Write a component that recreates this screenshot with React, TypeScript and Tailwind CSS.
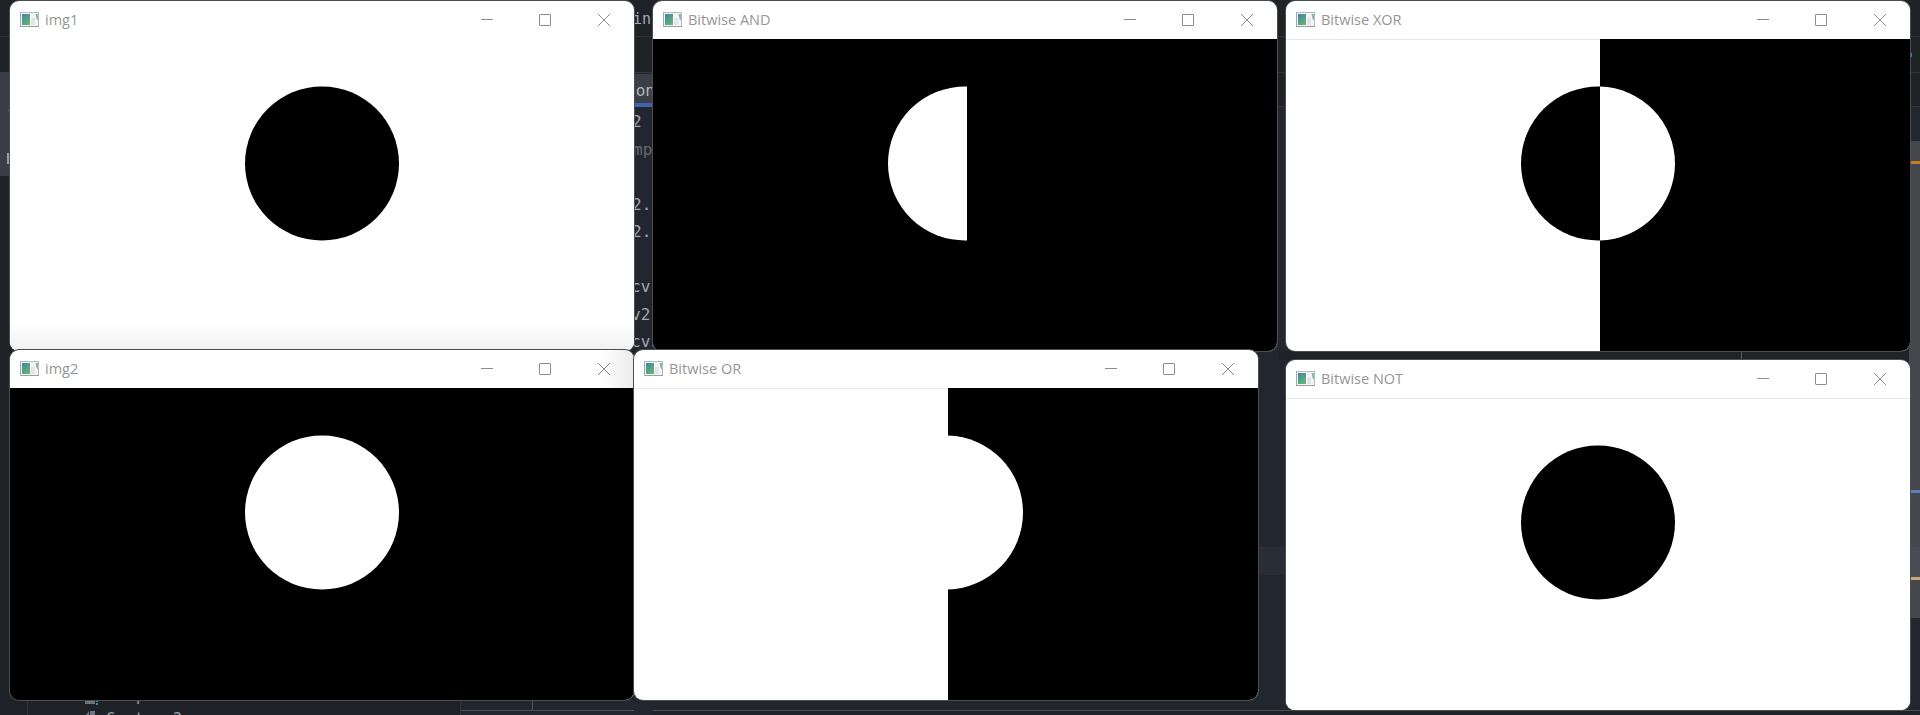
import React from "react";

type Scene = "circleDark" | "circleLight" | "and" | "or" | "xor";

const CX = 312;
const CY = 124.5;
const R = 77;
const SPLIT = 314;
const TOP = CY - Math.sqrt(R * R - (SPLIT - CX) ** 2);
const BOTTOM = 2 * CY - TOP;

function Canvas({ scene }: { scene: Scene }) {
  const left = scene === "or" || scene === "xor" || scene === "circleDark" ? "#fff" : "#000";
  const right = scene === "circleDark" ? "#fff" : "#000";
  const arcRight = `M${SPLIT} ${TOP}A${R} ${R} 0 0 1 ${SPLIT} ${BOTTOM}Z`;
  const arcLeft = `M${SPLIT} ${TOP}A${R} ${R} 0 1 0 ${SPLIT} ${BOTTOM}Z`;
  return (
    <svg className="block h-[312px] w-[624px]" viewBox="0 0 624 312">
      <rect width="624" height="312" fill={right} />
      <rect width={SPLIT} height="312" fill={left} />
      {scene === "circleDark" && <circle cx={CX} cy={CY} r={R} fill="#000" />}
      {scene === "circleLight" && <circle cx={CX} cy={CY} r={R} fill="#fff" />}
      {scene === "xor" && <path d={arcLeft} fill="#000" />}
      {scene === "and" && <path d={arcLeft} fill="#fff" />}
      {(scene === "or" || scene === "xor") && <path d={arcRight} fill="#fff" />}
    </svg>
  );
}

function AppIcon() {
  return (
    <svg className="h-4 w-5 shrink-0" viewBox="0 0 20 16">
      <defs>
        <linearGradient id="pane" x1="0" y1="0" x2="0.6" y2="1">
          <stop offset="0" stopColor="#4682a8" />
          <stop offset="1" stopColor="#5fb472" />
        </linearGradient>
      </defs>
      <rect x="0.5" y="0.5" width="18" height="14" fill="#f3f5f7" stroke="#b4bac4" />
      <path d="M0 14.5H19" stroke="#989faa" />
      <path d="M0.5 0V15" stroke="#a0a7b2" />
      <rect x="2" y="2" width="8" height="11" fill="url(#pane)" />
      <rect x="10" y="2" width="1" height="11" fill="#fff" />
      <rect x="11" y="6" width="4" height="7" fill="#e2e4e7" />
      <path d="M15.5 2H18V8.5L16.5 7Z" fill="#86b9a8" />
    </svg>
  );
}

function Controls() {
  return (
    <svg className="h-[38px] w-36 shrink-0" viewBox="0 0 144 38" fill="none" stroke="#8d8d8d">
      <path d="M1 18.5H13" />
      <rect x="59.5" y="13.5" width="11" height="11" rx="0.5" />
      <path d="M118 13L130 25M130 13L118 25" />
    </svg>
  );
}

function Win({
  title,
  scene,
  place,
  line,
  shade,
}: {
  title: string;
  scene: Scene;
  place: string;
  line?: string;
  shade?: string;
}) {
  return (
    <section className={`absolute h-[350px] w-[624px] overflow-hidden rounded-[9px] bg-white shadow-[0_0_0_1px_#4b4d50] ${place}`}>
      <header className="flex h-[38px] items-center">
        <div className="flex flex-1 items-center gap-[5px] pl-[10px]">
          <AppIcon />
          <span className="text-[14.5px] leading-5 whitespace-nowrap text-[#969696]">{title}</span>
        </div>
        <Controls />
        <div className="w-[10px]" />
      </header>
      <Canvas scene={scene} />
      {line && <div className={`absolute left-0 top-[38px] h-px bg-[#e8e8e8] ${line}`} />}
      {shade && <div className={`absolute ${shade}`} />}
    </section>
  );
}

const codeLines = [
  { text: "2", shift: "pl-0", tone: "text-[#a4a9b0]", tail: false },
  { text: "mp", shift: "pl-[1px]", tone: "text-[#666a72]", tail: false },
  { text: "", shift: "pl-0", tone: "", tail: false },
  { text: "2.", shift: "pl-0", tone: "text-[#a4a9b0]", tail: true },
  { text: "2.", shift: "pl-0", tone: "text-[#a4a9b0]", tail: true },
  { text: "", shift: "pl-0", tone: "", tail: false },
  { text: "cv", shift: "-ml-[1px]", tone: "text-[#a4a9b0]", tail: true },
  { text: "v2", shift: "-ml-[1px]", tone: "text-[#a4a9b0]", tail: false },
  { text: "cv", shift: "-ml-[1px]", tone: "text-[#a4a9b0]", tail: true },
];

function Editor() {
  return (
    <div className="flex h-[715px] w-[1920px] flex-col bg-[#22262e]">
      <div className="h-9 shrink-0 bg-[#1f2328] pl-[633px]">
        <div className="w-[20px] overflow-hidden pt-[7px] font-['DejaVu_Sans_Mono',monospace] text-[15px] leading-6 text-[#a4a9b0]">
          inc
        </div>
      </div>
      <div className="flex h-9 shrink-0 items-center justify-end border-t border-[#30343b] bg-[#1f2328]">
        <div className="mr-[8px] h-1 w-[2px] bg-[#3584b5]" />
      </div>
      <div className="flex flex-1">
        <div className="flex w-[634px] flex-col bg-[#1e2227]">
          <div className="flex h-[104px] w-[10px] flex-col items-end bg-[#3a3e47]">
            <div className="mt-4 h-px w-px bg-[#5278ad]" />
            <div className="mt-[21px] h-px w-[2px] bg-[#5278ad]" />
            <div className="mt-[23px] h-[5px] w-px bg-[#4464b0]" />
            <div className="mt-[14px] h-[11px] w-[3px] shrink-0 bg-[#9c9fa3]" />
          </div>
          <div className="flex-1" />
          <div className="flex h-[15px]">
            <div className="w-[28px] shrink-0 border-r border-[#2d3136]" />
            <div className="w-[432px] shrink-0 overflow-hidden pl-[56px]">
              <svg className="block h-[15px] w-[130px]" viewBox="0 0 130 15">
                <path d="M1 0H11V4H1Z" fill="#6d757e" />
                <path d="M12 0H14V2H12ZM12 3H14V5H12Z" fill="#2b8ca9" />
                <path d="M2 15L5 11V15ZM6 11H11V15H6Z" fill="#6d757e" />
                <g fill="#a0a4aa" fontFamily="DejaVu Sans Mono" fontSize="15">
                  <text x="23" y="0.7" textLength="96">Setperate2</text>
                  <text x="22" y="24.4" textLength="76">Contour2</text>
                </g>
              </svg>
            </div>
            <div className="flex flex-1 flex-col border-l border-[#30343b] bg-[#22262e]">
              <div className="h-[10px] w-[72px] border-r border-[#50535a]" />
              <div className="h-px bg-[#4b4e55]" />
            </div>
          </div>
        </div>
        <div className="flex w-[19px] flex-col overflow-hidden border-t border-[#353941]">
          <div className="mt-px flex h-[29px] items-center bg-[#3a3e47] pt-[4px] font-['DejaVu_Sans_Mono',monospace] text-[16px] text-[#b4b8bd]">
            <span className="-ml-[8px]">ion</span>
          </div>
          <div className="h-1 bg-[#4063b0]" />
          <div className="pt-[1px]">
            {codeLines.map((l, i) => (
              <div
                key={i}
                className={`flex h-[27.5px] items-center justify-between whitespace-nowrap font-['DejaVu_Sans_Mono',monospace] text-[16px] leading-[27.5px] ${l.shift} ${l.tone}`}
              >
                <span className="-ml-[2px]">{l.text}</span>
                {l.tail && <span className="h-[10px] w-px bg-[#365a85]" />}
              </div>
            ))}
          </div>
        </div>
        <div className="flex flex-1 flex-col">
          <div className="h-[35px] shrink-0 border-y border-[#30343b] bg-[#1f2328]" />
          <div className="flex flex-1">
            <div className="flex flex-1 flex-col">
              <div className="h-[244px]" />
              <div className="ml-[625px] h-[9px] bg-[#1f2328] pl-[463px]">
                <div className="h-full w-px bg-[#5a5d63]" />
              </div>
              <div className="h-[187px]" />
              <div className="h-7 bg-[#282d38]" />
              <div className="h-[135px]" />
              <div className="h-px bg-[#4b4e55]" />
              <div className="flex-1 bg-[#1f2329]" />
            </div>
            <div className="flex w-[11px] flex-col">
              <div className="h-[34px] pt-[14px]">
                <div className="ml-px h-[2px] w-px bg-[#999]" />
              </div>
              <div className="flex h-[477px] flex-col bg-[#44474b]">
                <div className="h-5" />
                <div className="h-[3px] bg-[#c87d20]" />
                <div className="h-[326px]" />
                <div className="h-[3px] bg-[#607db8]" />
                <div className="h-[54px]" />
                <div className="h-[30px] bg-[#484c55]" />
                <div className="h-[3px] bg-[#c6ac78]" />
              </div>
              <div className="h-[92px]" />
              <div className="h-px bg-[#4b4e55]" />
              <div className="flex-1 bg-[#1f2329]" />
            </div>
          </div>
        </div>
      </div>
    </div>
  );
}

export default function App() {
  return (
    <main className="relative h-[715px] w-[1920px] overflow-hidden font-['Open_Sans','Noto_Sans',sans-serif]">
      <Editor />
      <Win title="img1" scene="circleDark" place="left-[10px] top-px" shade="inset-x-0 bottom-0 h-7 bg-linear-to-t from-black/6 to-transparent" />
      <Win title="Bitwise AND" scene="and" place="left-[653px] top-px" />
      <Win title="Bitwise XOR" scene="xor" place="left-[1286px] top-px" line="w-[314px]" />
      <Win title="img2" scene="circleLight" place="left-[10px] top-[350px]" shade="right-0 top-0 h-[38px] w-8 bg-linear-to-l from-black/8 to-transparent" />
      <Win title="Bitwise OR" scene="or" place="left-[634px] top-[350px]" line="w-[314px]" />
      <Win title="Bitwise NOT" scene="circleDark" place="left-[1286px] top-[360px]" line="w-full" />
    </main>
  );
}
